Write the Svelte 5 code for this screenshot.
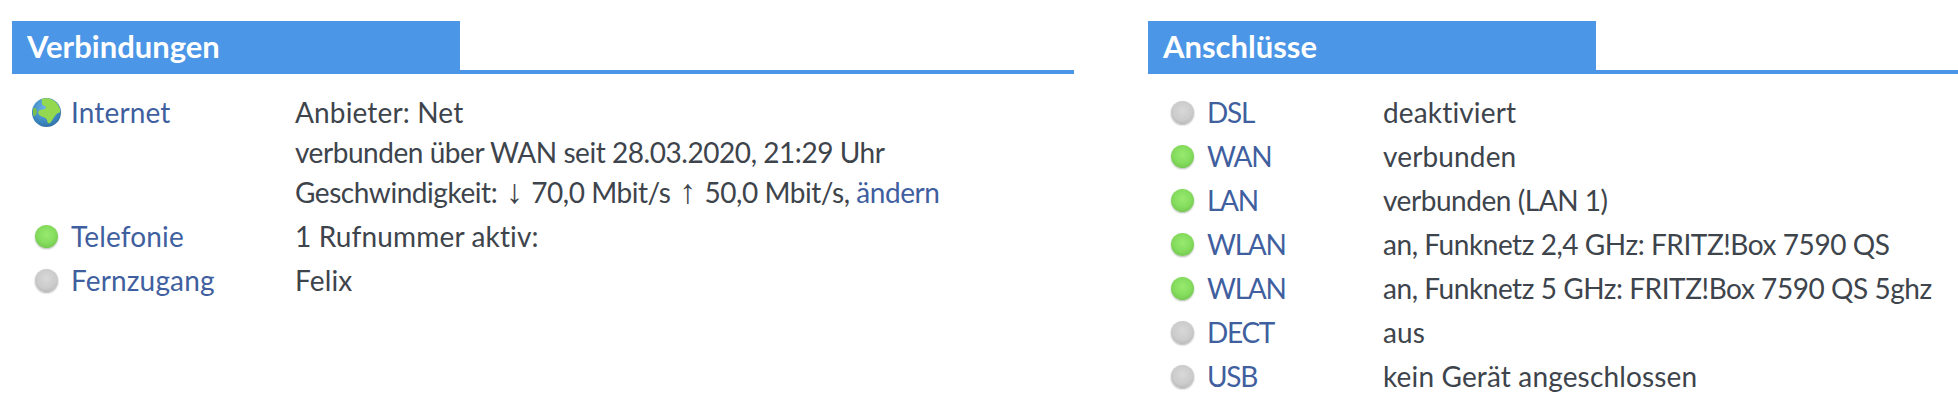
<script lang="ts">
	const connections = [
		{ led: 'globe', name: 'Internet' },
		{ led: 'on', name: 'Telefonie', lines: ['1 Rufnummer aktiv:'] },
		{ led: 'off', name: 'Fernzugang', lines: ['Felix'] }
	];

	// digit- and caps-heavy lines run wider in Lato than in the original font, hence tight
	const ports = [
		{ led: 'off', name: 'DSL', text: 'deaktiviert' },
		{ led: 'on', name: 'WAN', text: 'verbunden' },
		{ led: 'on', name: 'LAN', text: 'verbunden (LAN 1)', tight: true },
		{ led: 'on', name: 'WLAN', text: 'an, Funknetz 2,4 GHz: FRITZ!Box 7590 QS', tight: true },
		{ led: 'on', name: 'WLAN', text: 'an, Funknetz 5 GHz: FRITZ!Box 7590 QS 5ghz', tight: true },
		{ led: 'off', name: 'DECT', text: 'aus' },
		{ led: 'off', name: 'USB', text: 'kein Gerät angeschlossen' }
	];
</script>

{#snippet icon(led: string)}
	{#if led === 'globe'}
		<svg class="globe" viewBox="0 0 32 32" aria-hidden="true">
			<defs>
				<radialGradient id="sea" cx="0.45" cy="0.35" r="0.7">
					<stop offset="0" stop-color="#6fb4e8" />
					<stop offset="0.7" stop-color="#3b86c0" />
					<stop offset="1" stop-color="#2f6a9c" />
				</radialGradient>
			</defs>
			<circle cx="16" cy="16" r="15" fill="url(#sea)" />
			<path d="M11 2 C16 0 24 2 27 7 C29 10 31 13 30 16 C27 16 25 19 23 22 C21 26 19 29 17 26 C17 21 13 21 9 19 C6 16 8 13 12 13 C16 13 17 9 13 9 C11 8 11 5 11 2 Z" fill="#93d84f" />
			<path d="M2 12 C4 10 6 12 6 15 C6 18 5 19 3 20 C2 18 2 15 2 12 Z" fill="#7cc04a" />
		</svg>
	{:else}
		<span class="led {led}"></span>
	{/if}
{/snippet}

<div class="page">
	<section class="box connections">
		<h2>Verbindungen</h2>
		<div class="rows">
			{#each connections as row, i}
				<div class="row">
					<span class="icon">{@render icon(row.led)}</span>
					<a href="#top">{row.name}</a>
					{#if i === 0}
						<div>
							<div>Anbieter: Net</div>
							<div class="tight">verbunden über WAN seit 28.03.2020, 21:29 Uhr</div>
							<div class="tight">
								Geschwindigkeit: <span class="arrow">↓</span> 70,0 Mbit/s <span class="arrow">↑</span> 50,0 Mbit/s, <a href="#top">ändern</a>
							</div>
						</div>
					{:else}
						<div>{row.lines?.[0]}</div>
					{/if}
				</div>
			{/each}
		</div>
	</section>

	<section class="box ports">
		<h2>Anschlüsse</h2>
		<div class="rows">
			{#each ports as row}
				<div class="row">
					<span class="icon">{@render icon(row.led)}</span>
					<a href="#top" class="caps">{row.name}</a>
					<div class:tight={row.tight}>{row.text}</div>
				</div>
			{/each}
		</div>
	</section>
</div>

<style>
	:global(body) {
		margin: 0;
		background: #fff;
	}

	.page {
		display: flex;
		padding: 21px 0 0 12px;
		gap: 74px;
		font-family: Lato, 'Noto Sans', sans-serif;
		font-size: 28px;
		line-height: 40px;
		letter-spacing: 0.15px;
		color: #3e444c;
	}

	.connections {
		width: 1062px;
	}

	.ports {
		flex: 1;
	}

	h2 {
		width: 448px;
		height: 53px;
		margin: 0;
		padding-left: 15px;
		box-sizing: border-box;
		background: #4b96e6;
		color: #fff;
		font-size: 31px;
		font-weight: 700;
		line-height: 50px;
		letter-spacing: 0;
	}

	.box {
		background: linear-gradient(#4b96e6, #4b96e6) left 49px / 100% 4px no-repeat;
	}

	.rows {
		margin-top: 16px;
	}

	.row {
		display: grid;
		grid-template-columns: 59px 224px 1fr;
		padding: 2px 0;
		white-space: nowrap;
	}

	.ports .row {
		grid-template-columns: 59px 176px 1fr;
	}

	a {
		color: #3f5f9f;
		text-decoration: none;
	}

	.caps {
		letter-spacing: -1.3px;
	}

	.tight {
		letter-spacing: -0.45px;
	}

	.arrow {
		font-family: 'Liberation Sans', sans-serif;
		font-size: 34px;
		line-height: 0;
		margin: 0 2px;
	}

	.icon {
		display: flex;
		justify-content: center;
		align-items: center;
		width: 68px;
		height: 40px;
	}

	.globe {
		width: 31px;
		height: 31px;
	}

	.led {
		width: 23px;
		height: 23px;
		border-radius: 50%;
	}

	.led.on {
		background: radial-gradient(circle at 50% 42%, #98ea70 0, #84dc5c 50%, #74c452 80%, #b5d8a8 100%);
		box-shadow: 0 1px 2px #b4bcb4;
	}

	.led.off {
		background: radial-gradient(circle at 50% 42%, #d8d8d8 0, #cbcbcb 55%, #b8b8b8 80%, #d0d0d0 100%);
		box-shadow: 0 1px 2px #b4b4b4;
	}
</style>
